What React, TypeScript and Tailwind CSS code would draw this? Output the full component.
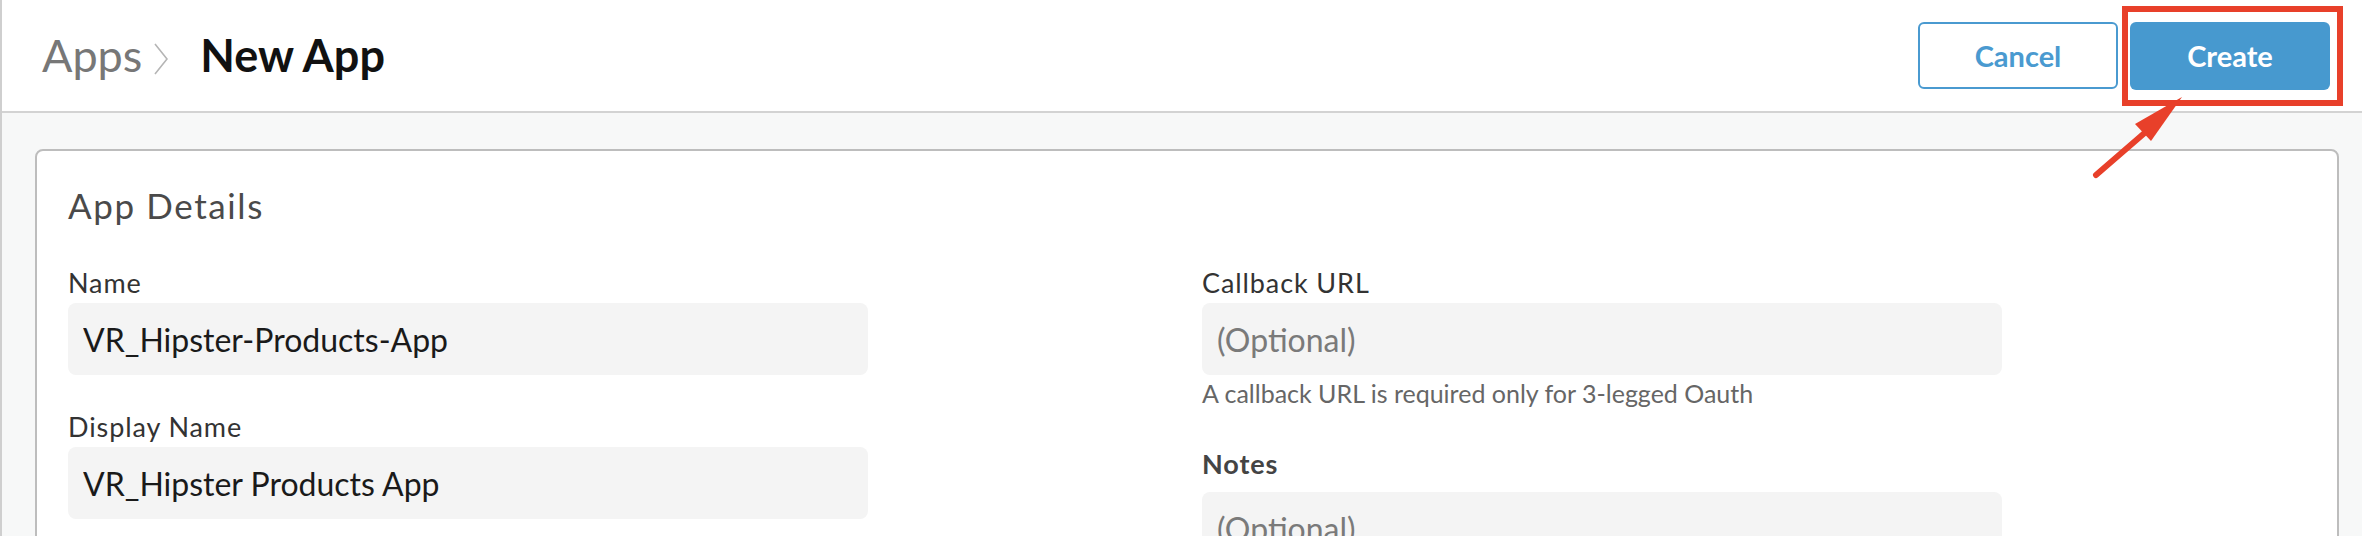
import { ChangeEvent, useState } from 'react'

interface FieldProps {
  label: string
  value?: string
  placeholder?: string
  bold?: boolean
  help?: string
}

// single labelled text field of the app form
function Field({ label, value, placeholder, bold, help }: FieldProps) {
  const [text, setText] = useState(value ?? '')
  return (
    <div className="flex flex-col">
      <label
        className={`text-[27px] leading-[32px] tracking-[0.9px] ${bold ? 'font-bold text-[#444] mb-[12px]' : 'text-[#333] mb-[4px]'}`}
      >
        {label}
      </label>
      <input
        value={text}
        placeholder={placeholder}
        onChange={(e: ChangeEvent<HTMLInputElement>) => setText(e.target.value)}
        className="h-[72px] w-full rounded-[8px] bg-[#f4f4f4] px-[15px] text-[32px] text-[#1a1a1a] outline-none placeholder:text-[#7a7a7a]"
      />
      {help && <p className="mt-[4px] text-[25px] leading-[28px] text-[#666]">{help}</p>}
    </div>
  )
}

export default function App() {
  return (
    <div className="relative h-[536px] w-full overflow-hidden border-l-2 border-[#cfcfcf] bg-[#f7f8f8] font-['Lato',sans-serif]">
      {/* header with breadcrumb and actions */}
      <div className="flex h-[113px] items-center justify-between border-b-2 border-[#d3d3d3] bg-white pl-[40px] pr-[32px]">
        <div className="flex items-center">
          <span className="text-[45px] text-[#777]">Apps</span>
          <svg width="14" height="32" viewBox="0 0 14 32" className="ml-[12px] mt-[6px]">
            <polyline points="1,1 13,16 1,31" fill="none" stroke="#b5b5b5" strokeWidth="1.6" />
          </svg>
          <span className="ml-[32px] text-[45px] font-bold text-[#111]">New App</span>
        </div>
        <div className="flex items-center gap-[12px]">
          <button className="h-[67px] w-[200px] rounded-[6px] border-2 border-[#4a9ad0] bg-white text-[29px] font-bold text-[#4a9ad0]">
            Cancel
          </button>
          <button className="h-[68px] w-[200px] rounded-[6px] bg-[#4799cf] text-[29px] font-bold text-white">
            Create
          </button>
        </div>
      </div>

      {/* form card */}
      <div className="ml-[33px] mr-[23px] mt-[36px] h-[500px] rounded-[8px] border-2 border-[#bdbdbd] bg-white pl-[31px] pt-[34px]">
        <h2 className="text-[35px] leading-[40px] tracking-[1.6px] text-[#4a4a4a]">App Details</h2>
        <div className="mt-[42px] flex gap-[334px]">
          <div className="flex w-[800px] flex-col gap-[36px]">
            <Field label="Name" value="VR_Hipster-Products-App" />
            <Field label="Display Name" value="VR_Hipster Products App" />
          </div>
          <div className="flex w-[800px] flex-col gap-[41px]">
            <Field
              label="Callback URL"
              placeholder="(Optional)"
              help="A callback URL is required only for 3-legged Oauth"
            />
            <Field label="Notes" placeholder="(Optional)" bold />
          </div>
        </div>
      </div>

      {/* annotation: red box and arrow pointing at Create */}
      <div className="pointer-events-none absolute left-[2120px] top-[6px] h-[100px] w-[221px] border-[6px] border-[#e8402a]" />
      <svg
        className="pointer-events-none absolute left-[2080px] top-[90px]"
        width="110"
        height="100"
        viewBox="2080 90 110 100"
      >
        <line x1="2094" y1="175" x2="2146" y2="130" stroke="#e8402a" strokeWidth="6" strokeLinecap="round" />
        <polygon points="2180,97 2133,124 2149,141" fill="#e8402a" />
      </svg>
    </div>
  )
}
